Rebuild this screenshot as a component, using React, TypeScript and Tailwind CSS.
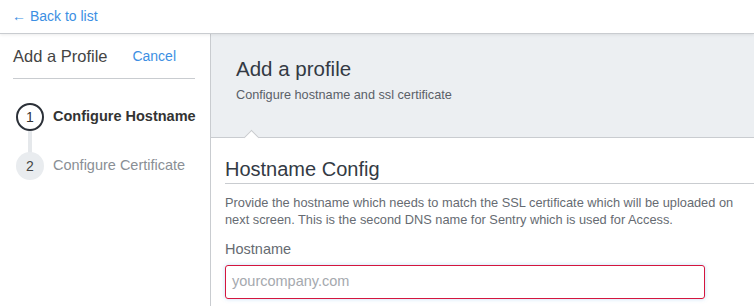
import React from "react";

export default function App() {
  return (
    <div className="w-[754px] h-[306px] overflow-hidden bg-white flex flex-col" style={{ fontFamily: '"Liberation Sans", Arial, sans-serif' }}>
      <div className="h-[34px] shrink-0 border-b border-[#c9ccd0] flex items-center pl-[12px] text-[14px] text-[#3c8fe3] relative z-10 shadow-[0_1px_3px_rgba(0,0,0,0.08)]">
        <span>← Back to list</span>
      </div>
      <div className="flex flex-1 min-h-0">
        <div className="w-[211px] shrink-0 border-r border-[#c9ccd0] px-[13px] pt-[10px]">
          <div className="flex items-center justify-between h-[25px] pr-[21px]">
            <span className="text-[16.5px] text-[#444]">Add a Profile</span>
            <span className="text-[14px] text-[#3c8fe3]">Cancel</span>
          </div>
          <div className="mt-[9px] mr-[2px] border-b border-[#c9ccd0]" />
          <div className="mt-[24px] relative">
            <div className="absolute left-[15px] top-[26px] w-[4px] h-[30px] bg-[#e5e8eb]" />
            <div className="flex items-center h-[28px] relative">
              <div className="w-[28px] h-[28px] rounded-full border-2 border-[#2b3038] bg-white flex items-center justify-center text-[14px] text-[#333] ml-[3px]">1</div>
              <span className="ml-[9px] text-[14.5px] font-bold text-[#333]">Configure Hostname</span>
            </div>
            <div className="flex items-center h-[28px] mt-[21px] relative">
              <div className="w-[28px] h-[28px] rounded-full bg-[#e9ecef] flex items-center justify-center text-[14px] text-[#444] ml-[3px]">2</div>
              <span className="ml-[9px] text-[14.5px] text-[#8a8f95]">Configure Certificate</span>
            </div>
          </div>
        </div>
        <div className="flex-1 flex flex-col">
          <div className="h-[104px] shrink-0 bg-[#eceff2] border-b border-[#c9ccd0] pl-[25px] pt-[22px] relative">
            <div className="text-[20.5px] text-[#333a44] leading-[26px]">Add a profile</div>
            <div className="text-[12.7px] text-[#5a6068] mt-[4px]">Configure hostname and ssl certificate</div>
            <div className="absolute left-[35px] bottom-[-6px] w-[11px] h-[11px] bg-white border-l border-t border-[#c9ccd0] rotate-45" />
          </div>
          <div className="pl-[14px] pt-[19px]">
            <div className="text-[20px] text-[#333a44] leading-[24px] pb-[2px] border-b border-[#c9ccd0]">Hostname Config</div>
            <p className="mt-[10px] w-[515px] text-[12.8px] leading-[17px] text-[#666b72]">
              Provide the hostname which needs to match the SSL certificate which will be uploaded on next screen. This is the second DNS name for Sentry which is used for Access.
            </p>
            <div className="mt-[11px] text-[14.5px] leading-[20px] text-[#666b72]">Hostname</div>
            <div className="mt-[6px] w-[480px] h-[34px] border border-[#d4163e] rounded-[3px] flex items-center pl-[6px] text-[14.5px] text-[#a5a9ae] shadow-[0_0_4px_rgba(80,160,230,0.35)]">
              yourcompany.com
            </div>
          </div>
        </div>
      </div>
    </div>
  );
}
